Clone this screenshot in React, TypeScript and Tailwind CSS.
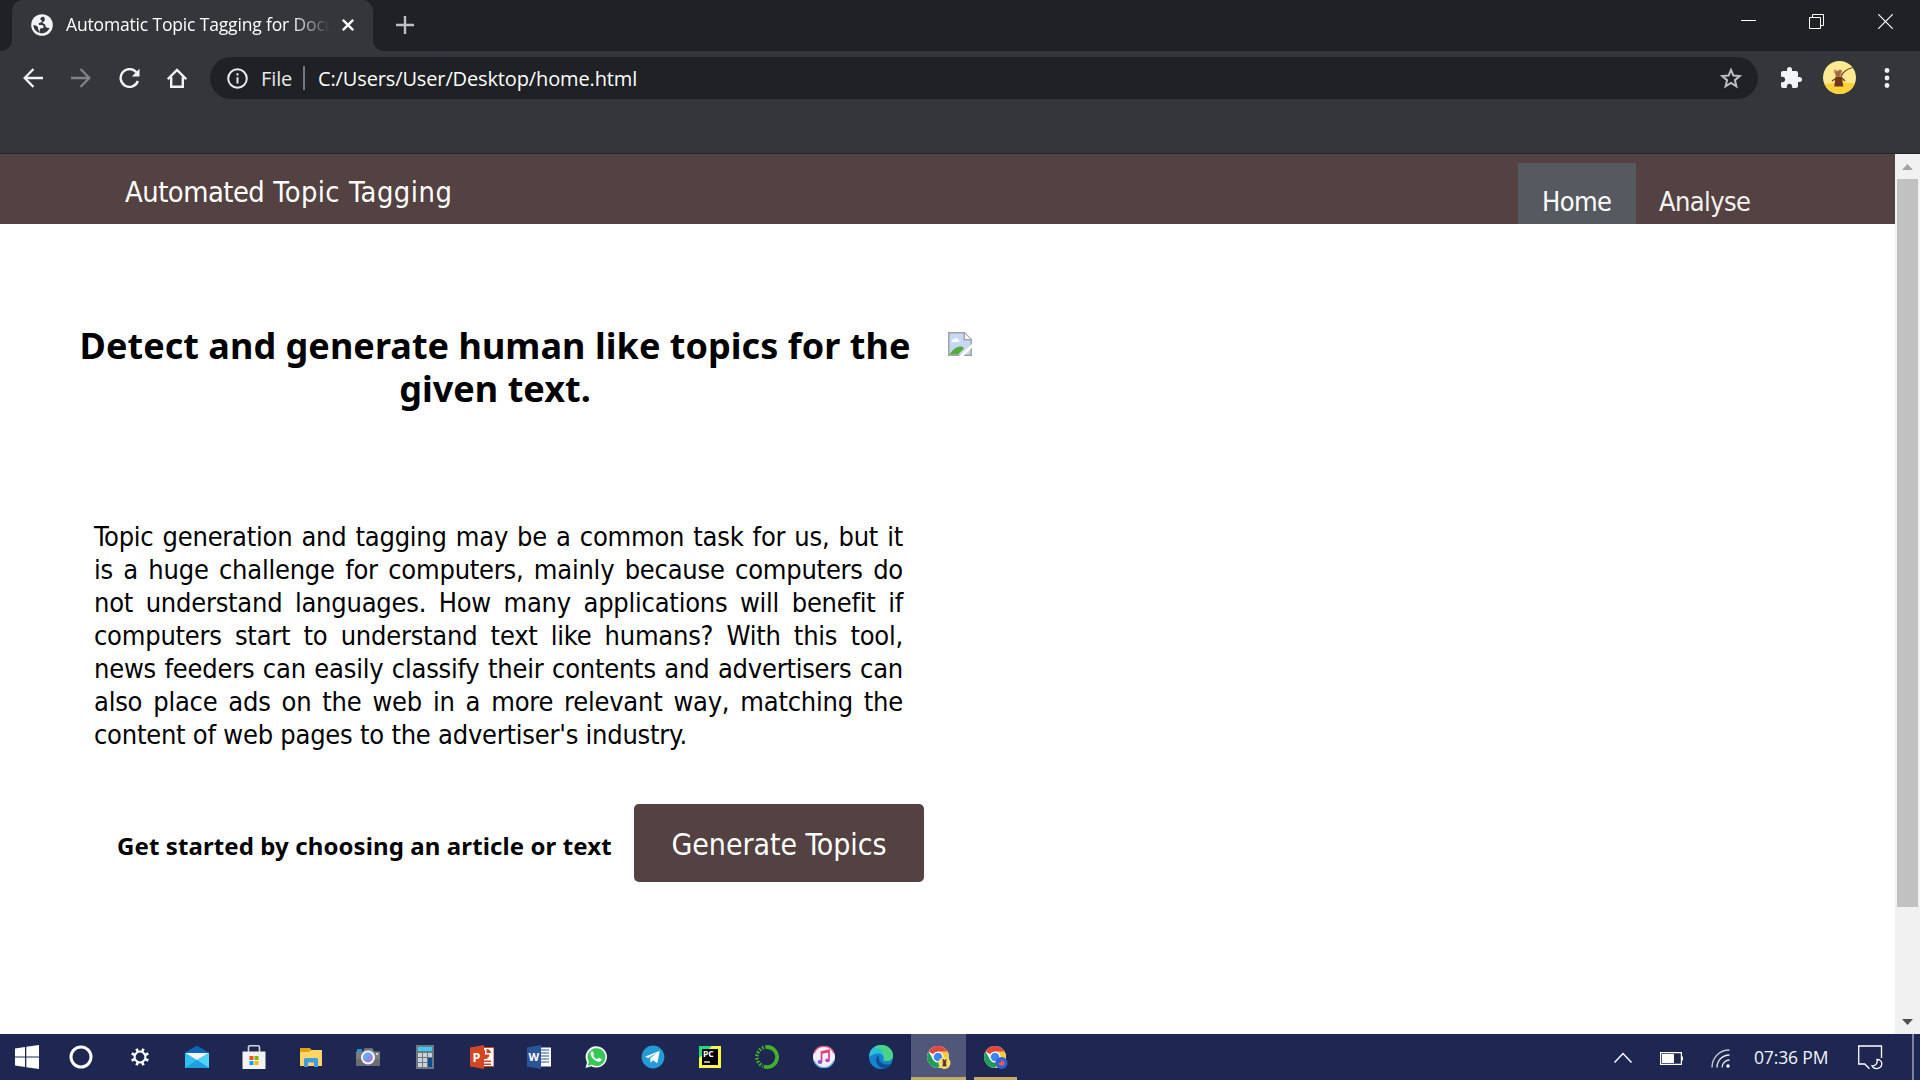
import React from "react";
import type { ReactNode } from "react";

const ui = "font-['Open_Sans',sans-serif]";
const page = "font-['DejaVu_Sans_Condensed','DejaVu_Sans',sans-serif]";

function TabStrip() {
  return (
    <div className="flex h-[51px] shrink-0 bg-[#202124]">
      <div className="flex w-3 shrink-0 bg-[#35363a]">
        <div className="w-3 rounded-br-[11px] bg-[#202124]" />
      </div>
      <div className="flex w-[361px] shrink-0 items-center rounded-t-[11px] bg-[#35363a] pl-[19px]">
        <svg className="mb-px size-[22px] shrink-0" viewBox="0 0 22 22">
          <circle cx="11" cy="11" r="10.8" fill="#f1f3f4" />
          <path
            d="M13 2.800c-2.200-.3-3.800 1-3.600 2.500.2 1.300 1.700.9 1.500 2.100-.3 1.300-2.800.8-3.300 2.100-.3 1 .6 1.500 1.600 1.500 1.800 0 3.200.2 3.500 1.700.2 1.400-1.400 1.500-2.700 1.500-.8 0-1 .8-1.200 1.900-.2.900-.3 1.700-.1 2.900 4 1.100 8.500-1.200 9.900-5.300-1.700.6-3.200.2-3.900-.9-.6-1-.1-1.900-1-2.800-.9-.8-2.100-.3-2.100-1.300 0-1 1.600-.9 2.100-1.900.6-1.200-.3-2.600-.7-4zM2.500 11c1.600.2 3.300.7 4.100 1.800.8 1 .2 2 .9 3.100.5.8.8 1.800.8 3C4.700 17.600 2.400 14.500 2.500 11z"
            fill="#35363a"
          />
        </svg>
        <div className="ml-[13px] h-[26px] w-[264px] overflow-hidden whitespace-nowrap text-[17.5px] leading-[26px] tracking-[-0.16px] text-white [mask-image:linear-gradient(to_right,black_225px,transparent_264px)] -translate-y-[2px]">
          Automatic Topic Tagging for Docu
        </div>
        <svg className="ml-[12px] mb-px size-[12px] shrink-0" viewBox="0 0 12 12" stroke="#fff" strokeWidth="2.3">
          <path d="M.8.8 11.200 11.200M11.200.8.8 11.200" />
        </svg>
      </div>
      <div className="flex w-3 shrink-0 bg-[#35363a]">
        <div className="w-3 rounded-bl-[11px] bg-[#202124]" />
      </div>
      <svg className="ml-[11px] mt-4 size-[18px]" viewBox="0 0 18 18" stroke="#bdc1c6" strokeWidth="2.4">
        <path d="M9 0v18M0 9h18" />
      </svg>
      <div className="ml-auto mr-[27px] flex h-[43px] items-center gap-[53px]">
        <svg className="size-[15px] overflow-visible" viewBox="0 0 15 15" stroke="#fff">
          <path d="M-1 6.500h15" />
        </svg>
        <svg className="size-[15px] overflow-visible" viewBox="1 0 15 15" fill="none" stroke="#fff">
          <path d="M.5 3.500h11v11h-11zM3.500 3.500v-3h11v11h-3" />
        </svg>
        <svg className="size-[15px]" viewBox="0 0 15 15" stroke="#fff" strokeWidth="1.200">
          <path d="M.3.3 14.700 14.700M14.700.3.3 14.700" />
        </svg>
      </div>
    </div>
  );
}

function Toolbar() {
  return (
    <div className="flex h-[103px] shrink-0 items-start border-b border-[#242528] bg-[#35363a] pt-[6px]">
      <div className="flex h-[42px] w-[210px] shrink-0 items-center">
        <svg className="ml-[23px] size-5" viewBox="0 0 20 20" fill="none" stroke="#f1f3f4" strokeWidth="2.300">
          <path d="M20 10H1.800M10.500 1 1.700 10l8.800 9" />
        </svg>
        <svg className="ml-[28px] size-5" viewBox="0 0 20 20" fill="none" stroke="#818286" strokeWidth="2.300">
          <path d="M0 10h18.200M9.500 1l8.800 9-8.800 9" />
        </svg>
        <svg className="ml-[28px] size-[21px]" viewBox="0 0 21 21" fill="none" stroke="#f1f3f4" strokeWidth="2.400">
          <path d="M17.300 4.200A8.900 8.900 0 1 0 18.900 13" />
          <path d="M20.500.8v7.700h-7.700z" fill="#f1f3f4" stroke="none" />
        </svg>
        <svg className="ml-[27px] size-5" viewBox="0 0 20 20" fill="none" stroke="#f1f3f4" strokeWidth="2.400">
          <path d="M.8 11.200 10 2l9.200 9.200M4.200 9v9.800h11.600V9" />
        </svg>
      </div>
      <div className="flex h-[42px] w-[1548px] shrink-0 items-center rounded-full bg-[#202124] pl-[17px] pr-[16px]">
        <svg className="size-[21px] shrink-0" viewBox="0 0 21 21" fill="none" stroke="#e8eaed" strokeWidth="2">
          <circle cx="10.500" cy="10.500" r="9.300" />
          <path d="M10.500 9.300v6.200M10.500 5.300v2.200" />
        </svg>
        <span className="ml-[12px] w-[43px] pl-px pt-px text-[20px] leading-[41px] tracking-[-0.1px] text-[#e8eaed]">File</span>
        <span className="h-6 w-[2px] bg-[#77797d]" />
        <span className="ml-[13px] pt-px text-[20px] leading-[41px] tracking-[-0.13px] text-white">
          C:/Users/User/Desktop/home.html
        </span>
        <svg className="ml-auto size-[22px]" viewBox="0 0 22 22" fill="none" stroke="#bdbfc2" strokeWidth="2">
          <path d="m11 2.800 2.400 5.800 6.300.5-4.800 4.100 1.500 6.100-5.400-3.300-5.400 3.300 1.500-6.100-4.800-4.100 6.300-.5z" />
        </svg>
      </div>
      <svg className="ml-[21px] mt-[9px] size-[24px]" viewBox="0 0 24 24" fill="#f1f3f4">
        <path d="M20.500 11H19V7c0-1.100-.9-2-2-2h-4V3.500a2.500 2.500 0 0 0-5 0V5H4c-1.100 0-2 .9-2 2v3.800h1.500c1.500 0 2.700 1.200 2.700 2.700s-1.200 2.700-2.700 2.700H2V20c0 1.100.9 2 2 2h3.800v-1.500c0-1.500 1.200-2.700 2.700-2.700s2.700 1.200 2.700 2.700V22H17c1.100 0 2-.9 2-2v-4h1.500a2.500 2.500 0 0 0 0-5z" />
      </svg>
      <svg className="ml-[20px] mt-1 size-[33px]" viewBox="0 0 33 33">
        <clipPath id="avatarClip"><circle cx="16.500" cy="16.500" r="16.500" /></clipPath>
        <g clipPath="url(#avatarClip)">
          <path d="M0 0h33v33H0z" fill="#fbea92" />
          <path d="M0 23q16-2 33-1v11H0z" fill="#fdd23b" />
          <path d="M18 15Q22 8 30 6.500" stroke="#6e3518" fill="none" strokeWidth="1.200" />
          <path d="m12.500 15.500-1.200 10h9l-1.300-10z" fill="#6e3518" />
          <path d="m13.500 17-4.500 3M19 17l3 3" stroke="#7b4020" strokeWidth="1.500" />
          <circle cx="12.500" cy="10.500" r="1.900" fill="#c39663" />
          <circle cx="17" cy="10.500" r="1.900" fill="#a9764a" />
          <circle cx="15" cy="12.800" r="2.800" fill="#a06a40" />
        </g>
      </svg>
      <svg className="ml-[28px] mt-[11px] h-5 w-[6px]" viewBox="0 0 6 20" fill="#f1f3f4">
        <circle cx="3" cy="2.500" r="2.400" />
        <circle cx="3" cy="10" r="2.400" />
        <circle cx="3" cy="17.500" r="2.400" />
      </svg>
    </div>
  );
}

function BrokenImage() {
  return (
    <svg className="mt-[8px] h-6 w-6 shrink-0" viewBox="0 0 24 24">
      <path d="M.8.8h15.700l6.700 6.700v15.700H.8z" fill="#c6d8f4" stroke="#a3a3a3" strokeWidth="1.500" />
      <path d="M16.300 1v6.700H23" fill="#fff" stroke="#a3a3a3" strokeWidth="1.500" />
      <path d="M3.500 9.500c0-2 1.500-2.700 2.700-2.200 1-2.200 4.300-1.500 4.300.7 1 .2 1.300 1.500.3 1.900H4z" fill="#fff" />
      <path d="M1.600 22.400C5 17 9 13.800 13.500 14.500c2 .4 2 1.500 2.500 2L10 22.400z" fill="#57ab3c" />
      <path d="M24 12v3.500L15.500 24H11z" fill="#fff" />
    </svg>
  );
}

function Site() {
  return (
    <div className={`flex h-[880px] shrink-0 bg-white ${page}`}>
      <div className="flex w-[1895px] shrink-0 flex-col">
        <header className="flex h-[70px] shrink-0 justify-between bg-[#544141]">
          <div className="ml-[125px] flex gap-[9px] pt-[16px] text-[28.8px] leading-[44px] text-white">
            <span className="tracking-[-0.5px]">Automated</span>{" "}
            <span className="tracking-[0.4px]">Topic</span>{" "}
            <span className="tracking-[0.5px]">Tagging</span>
          </div>
          <nav className="mt-[9px] mr-[120px] flex text-[27px] leading-[78px] tracking-[-0.6px] text-[#f2f2f2]">
            <div className="h-[61px] w-[118px] overflow-hidden bg-[#565960] pl-[24px] text-white">Home</div>
            <div className="h-[61px] w-[139px] overflow-hidden pl-[23px]">Analyse</div>
          </nav>
        </header>
        <main className="flex">
          <section className="flex w-[948px] shrink-0 flex-col pt-[100px]">
            <h1 className="ml-[70px] w-[850px] text-center font-['Noto_Sans',sans-serif] text-[36px] font-bold leading-[43px] tracking-[0.04px] text-black">
              Detect and generate human like topics for the
              <br />
              given text.
            </h1>
            <p className="ml-[94px] mt-[110px] w-[809px] text-justify text-[27px] leading-[33px] tracking-[-0.23px] text-black">
              Topic generation and tagging may be a common task for us, but it is a huge challenge for computers, mainly
              because computers do not understand languages. How many applications will benefit if computers start to
              understand text like humans? With this tool, news feeders can easily classify their contents and
              advertisers can also place ads on the web in a more relevant way, matching the content of web pages to the
              advertiser's industry.
            </p>
            <div className="mt-[53px] flex items-center pl-[117px]">
              <span className="w-[517px] whitespace-nowrap pt-[6px] font-['Noto_Sans',sans-serif] text-[24px] font-bold leading-[32px] tracking-[0.1px] text-black">
                Get started by choosing an article or text
              </span>
              <button className="h-[78px] w-[290px] rounded-[5px] bg-[#544141] pt-[4px] text-[30px] leading-[40px] tracking-[-0.07px] text-white">
                Generate Topics
              </button>
            </div>
          </section>
          <div className="pt-[100px]">
            <BrokenImage />
          </div>
        </main>
      </div>
      <div className="flex w-[25px] shrink-0 flex-col items-center bg-[#f1f1f1]">
        <svg className="h-[25px] w-[25px] shrink-0" viewBox="0 0 25 25">
          <path d="M7 16h11l-5.500-6z" fill="#a3a3a3" />
        </svg>
        <div className="h-[728px] w-[21px] shrink-0 bg-[#c1c1c1]" />
        <svg className="mt-auto h-[25px] w-[25px] shrink-0" viewBox="0 0 25 25">
          <path d="M7 10h11l-5.500 6z" fill="#505050" />
        </svg>
      </div>
    </div>
  );
}

function Icon({ children, className = "" }: { children: ReactNode; className?: string }) {
  return (
    <div className={`flex h-[46px] w-[57px] shrink-0 items-center justify-center ${className}`}>
      <svg className="size-6" viewBox="0 0 24 24">{children}</svg>
    </div>
  );
}

function Chrome() {
  return (
    <>
      <circle cx="11" cy="12" r="11" fill="#fff" />
      <path d="M11 12 1.500 6.500A11 11 0 0 1 20.500 6.500z" fill="#e0483c" />
      <path d="M11 12V6.500h9.500A11 11 0 0 1 11 23l4.800-8.300z" fill="#fbc935" />
      <path d="M1.500 6.500A11 11 0 0 0 11 23l4.800-8.300L6.200 14.700z" fill="#1f9d58" />
      <circle cx="11" cy="12" r="5.600" fill="#fff" />
      <circle cx="11" cy="12" r="4.300" fill="#4285f4" />
    </>
  );
}

function Taskbar() {
  return (
    <div className={`flex h-[46px] shrink-0 bg-[#1e2751] ${ui}`}>
      <Icon className="w-[54px]!">
        <path d="M0 3.500 10 2v9.500H0zM11.300 1.800 24 0v11.500H11.300zM0 12.500h10V22L0 20.600zM11.300 12.500H24V24l-12.700-1.800z" fill="#fff" />
      </Icon>
      <Icon className="w-[54px]!">
        <circle cx="12" cy="12" r="10" fill="none" stroke="#fff" strokeWidth="3" />
      </Icon>
      <Icon className="ml-[3px]">
        <circle cx="12" cy="12" r="5.400" fill="none" stroke="#fff" strokeWidth="2" />
        <path d="M12 3v3.200M12 17.800V21M3 12h3.200M17.800 12H21M5.600 5.600l2.300 2.300M16.100 16.100l2.300 2.300M18.400 5.600l-2.300 2.300M7.900 16.100l-2.300 2.300" stroke="#fff" strokeWidth="2.600" transform="rotate(22.500 12 12)" />
      </Icon>
      <Icon>
        <path d="M0 7.500 12 .8l12 6.700-12 9z" fill="#0b65b8" />
        <path d="M1 8h22v7H1z" fill="#f4f4f4" />
        <path d="M0 7.800 12 15l12-7.200v15.200H0z" fill="#32bdf0" />
        <path d="M24 7.800v15.200L12 15z" fill="#50d2fa" />
        <path d="m0 23 12-8 12 8z" fill="#1d9fe2" />
      </Icon>
      <Icon>
        <path d="M6.500 7V2.200q0-1.400 1.400-1.400h8.200q1.400 0 1.400 1.400V7" fill="none" stroke="#d5d7dc" strokeWidth="1.600" />
        <path d="M.5 6.500h23V24H.5z" fill="#f3f3f3" />
        <path d="M7.500 11h4v4h-4z" fill="#f25022" />
        <path d="M12.500 11h4v4h-4z" fill="#7fba00" />
        <path d="M7.500 16h4v4h-4z" fill="#00a4ef" />
        <path d="M12.500 16h4v4h-4z" fill="#ffb900" />
      </Icon>
      <Icon>
        <path d="M1 3h10l1.500 2V9H1z" fill="#e0a31a" />
        <path d="M1 7h9l2.500-2H23v16H1z" fill="#ffd566" />
        <path d="M5 22v-7.500q0-1.500 1.500-1.500h11q1.500 0 1.500 1.500V22h-4v-4.500H9V22z" fill="#3f9be3" />
      </Icon>
      <Icon>
        <path d="M1 4h5v3H1z" fill="#1a96dc" />
        <path d="M0 6.500h7l1.500-3.200h8L18 6.500h6V21H0z" fill="#7a7e82" />
        <path d="M0 14h24v7H0z" fill="#6a6e72" />
        <circle cx="12" cy="12.500" r="7" fill="#f5f5f7" />
        <circle cx="12" cy="12.500" r="4.900" fill="#9a86e0" />
        <path d="M7.100 12.500a4.900 4.900 0 0 1 8.400-3.400l-6.900 7A4.900 4.900 0 0 1 7.100 12.500z" fill="#6aa9f0" />
        <path d="M20 8h2v2h-2z" fill="#cfd3d6" />
      </Icon>
      <Icon>
        <path d="M3 0h18v24H3z" fill="#6f7880" />
        <path d="M5 2h14v4H5z" fill="#3dcbf4" />
        <path d="M5 8h4v4H5zM10 8h4v4h-4zM15 8h4v4h-4zM5 13h4v4H5zM10 13h4v4h-4zM5 18h4v4H5zM10 18h4v4h-4z" fill="#c9d2da" />
        <path d="M15 13h4v9h-4z" fill="#0c4c8f" />
      </Icon>
      <Icon>
        <path d="M13 2.500h11v19H13z" fill="#fff" stroke="#d24625" />
        <path d="M19.500 9.500a4.500 4.500 0 1 1-4.500-4.500v4.500zM16.500 4a4.500 4.500 0 0 1 4.500 4h-4.500zM14 15.500h7V17h-7zM14 18.500h7V20h-7z" fill="#d24625" />
        <path d="M0 2.500 14 0v24L0 21.500z" fill="#d24625" />
        <text x="2.500" y="16.800" fontSize="12.500" fontWeight="700" fill="#fff">P</text>
      </Icon>
      <Icon>
        <path d="M13 2.500h11v19H13z" fill="#fff" />
        <path d="M14 5h8M14 8h8M14 11h8M14 14h8M14 17h8" stroke="#2a5699" strokeWidth="1.200" />
        <path d="M0 2.500 14 0v24L0 21.500z" fill="#2a5699" />
        <text x="1.500" y="16" fontSize="11" fontWeight="700" fill="#fff">W</text>
      </Icon>
      <Icon>
        <path d="M1.500 23 3 17.200A10.700 10.700 0 1 1 7.200 21.300z" fill="#f6f8f7" />
        <path d="m3.700 20.800 1.200-4A8.900 8.900 0 1 1 8 19.800z" fill="#35c753" />
        <path d="M9 7c-.5-.9-1.300-.8-2 .1-1.200 1.700-.4 4 2.200 6.700 3 3 6.400 4 7.900 2 .8-1.100.6-1.700.1-2l-2.300-1.100c-.8-.3-1.200 1.500-2 1.400-1.500-.5-3.200-2-3.700-3.300-.1-.7 1.200-1 .8-1.800z" fill="#fff" />
      </Icon>
      <Icon>
        <circle cx="12" cy="12" r="11.400" fill="#229bd6" />
        <path d="m4 11.800 14.800-6-2.500 12.500-4.200-3-2.300 2.400-.8-4.200 7-5.900-8.700 5.300z" fill="#fff" />
      </Icon>
      <Icon>
        <path d="M1 1h22v22H1z" fill="#fcf84a" />
        <path d="M1 1h13L1 13z" fill="#21d789" />
        <path d="M4 4h16v16H4z" fill="#000" />
        <text x="5" y="12.200" fontSize="8.500" fontWeight="700" fill="#fff">PC</text>
        <path d="M6 17h6" stroke="#fff" strokeWidth="1.300" />
      </Icon>
      <Icon>
        <path d="M12 2a10 10 0 1 1-3 19.500" fill="none" stroke="#43b02a" strokeWidth="3.800" />
        <path d="M12 2A10 10 0 0 0 8 21.200" fill="none" stroke="#43b02a" strokeWidth="3.600" strokeDasharray="1.800 1.500" />
      </Icon>
      <Icon>
        <circle cx="12" cy="12" r="11" fill="#f3effa" />
        <path d="M2.200 8A10.600 10.600 0 0 1 21.800 8" fill="none" stroke="#f05a7c" strokeWidth="1.300" />
        <path d="M2.200 16a10.600 10.600 0 0 0 19.600 0" fill="none" stroke="#5fb4f2" strokeWidth="1.300" />
        <path d="M9.500 16.500V7l7.500-1.700v9.500M9.500 8.200 17 6.500" fill="none" stroke="#e2407a" strokeWidth="1.700" />
        <ellipse cx="8" cy="17" rx="2.400" ry="1.900" fill="#8b55d8" />
        <ellipse cx="15.500" cy="15.300" rx="2.400" ry="1.900" fill="#c348ae" />
      </Icon>
      <Icon>
        <circle cx="12" cy="12" r="12" fill="#1583d0" />
        <path d="M.3 9.500C1.500 3.500 6.500 0 12 0c7 0 12 5 12 10.500 0 4-3.500 5.500-6.300 5.500-2.200 0-3.700-.8-3.200-1.800.8-1.500-.3-5.200-4.800-5.700-4-.4-7.500 1.500-9.700 3.800z" fill="#2cc0d8" />
        <path d="M12 0c7 0 12 5 12 10.500 0 4-3.500 5.500-6.300 5.500-2.200 0-3.700-.8-3.200-1.800C16.500 9 13 3 5 2.200A12 12 0 0 1 12 0z" fill="#55d872" fillOpacity=".8" />
        <path d="M8 11.500c-3 5 1.500 12.300 7.500 12 3-.5 5.700-2.500 7.200-5.200-6.200 3.200-14.200-.3-12.700-7.800z" fill="#0e4f96" />
      </Icon>
      <div className="ml-[2px] flex w-[55px] flex-col bg-[#50577b]">
        <div className="flex h-[43px] items-center justify-center pl-px pt-[3px]">
          <svg className="size-6 overflow-visible" viewBox="0 0 24 24">
            <Chrome />
            <circle cx="17.500" cy="18" r="6" fill="#f8df75" />
            <path d="M15.500 14.500h1.200l.8 1 .8-1h1.200l-.8 2.700.7 4h-3.800l.7-4zM14.500 17.500h6" fill="#5e3318" stroke="#5e3318" strokeWidth=".3" />
          </svg>
        </div>
        <div className="h-[3px] bg-[#c5ab68]" />
      </div>
      <div className="ml-2 flex w-[43px] flex-col">
        <div className="flex h-[43px] items-center justify-center pt-[3px]">
          <svg className="size-6 overflow-visible" viewBox="0 0 24 24">
            <Chrome />
            <circle cx="17.500" cy="18" r="6" fill="#2b62d9" />
            <path d="m18 14 1 2.500 2 .5-1.500 3.500h-4L14 17.500l2.500.5z" fill="#f4584e" />
          </svg>
        </div>
        <div className="h-[3px] bg-[#c5ab68]" />
      </div>
      <div className="ml-auto flex h-[46px] items-center">
        <svg className="h-[11px] w-[18px]" viewBox="0 0 18 11" fill="none" stroke="#fff" strokeWidth="1.500">
          <path d="m.5 10.500 8.500-9 8.500 9" />
        </svg>
        <svg className="ml-[28px] mt-[2px] h-[13px] w-[23px]" viewBox="0 0 23 13">
          <path d="M.6.6h20.800v11.800H.6z" fill="none" stroke="#fff" strokeWidth="1.200" />
          <path d="M2 2h12v9H2zM22 4.500h1v4h-1z" fill="#fff" />
        </svg>
        <svg className="ml-[28px] mt-[2px] size-[19px]" viewBox="0 0 19 19" fill="none" stroke="#fff">
          <path d="M1 18.500C1 9 8 1 18.500 1" strokeWidth="1.300" strokeOpacity=".75" />
          <path d="M6 18.500C6 12 11 6 18.500 6M11 18.500C11 14.500 14.500 11 18.500 11" strokeWidth="1.300" strokeOpacity=".9" />
          <circle cx="17" cy="17" r="1.700" fill="#fff" stroke="none" />
        </svg>
        <span className="ml-[24px] w-[75px] whitespace-nowrap text-[17.5px] leading-[44px] tracking-[-0.15px] text-[#f2f3f7]">
          07:36 PM
        </span>
        <svg className="ml-[29px] size-[25px]" viewBox="0 0 25 25" fill="none" stroke="#fff" strokeWidth="1.300">
          <path d="M23.500 13V1H.7v18h6l4.800 4.700" />
          <path d="M19 14.500c1 3.500-1.500 6.500-5 6.300 2.500 4.700 9.700 3.200 9.800-2.300 0-2.200-2-4-4.800-4z" />
        </svg>
        <div className="ml-[29px] h-[46px] w-[2px] bg-[#7d82a0]" />
        <div className="w-[6px]" />
      </div>
    </div>
  );
}

export default function App() {
  return (
    <div className={`flex h-[1080px] w-[1920px] flex-col overflow-hidden bg-white ${ui}`}>
      <TabStrip />
      <Toolbar />
      <Site />
      <Taskbar />
    </div>
  );
}
